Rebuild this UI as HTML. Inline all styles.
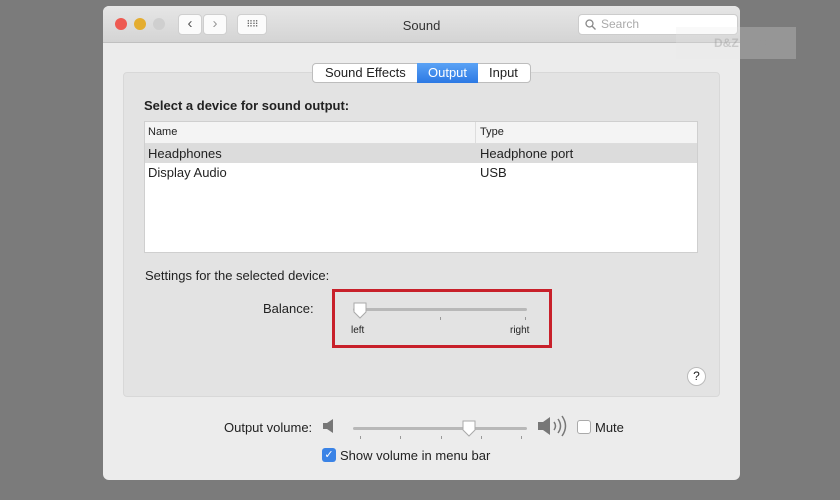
<!DOCTYPE html>
<html><head><meta charset="utf-8"><style>
*{margin:0;padding:0;box-sizing:border-box}
body{width:840px;height:500px;background:#7b7b7b;font-family:"Liberation Sans",sans-serif;position:relative;overflow:hidden;color:#222}
.a{position:absolute}
.win{left:103px;top:6px;width:637px;height:474px;background:#ececec;border-radius:6px;overflow:hidden}
.tb{left:0;top:0;width:637px;height:37px;background:linear-gradient(#e6e6e6,#d4d4d4);border-bottom:1px solid #c0c0c0}
.dot{width:12px;height:12px;border-radius:50%;top:12px}
.btn{background:#fbfbfb;border:1px solid #cfcfcf;border-radius:4px;height:21px;top:8px}
.panel{left:20px;top:66px;width:597px;height:325px;background:#e3e3e3;border:1px solid #d8d8d8;border-radius:4px}
.seg{top:57px;height:20px;background:#fff;border:1px solid #bdbdbd;border-radius:4px;font-size:13px;line-height:18px}
.t13{font-size:13px}
</style></head><body>
<div class="a win">
 <div class="a tb">
  <div class="a dot" style="left:12px;background:#ee5a52"></div>
  <div class="a dot" style="left:31px;background:#e4ad30"></div>
  <div class="a dot" style="left:50px;background:#cfcfcf"></div>
  <div class="a btn" style="left:75px;width:24px;font-size:15px;text-align:center;line-height:18px;color:#555">‹</div>
  <div class="a btn" style="left:100px;width:24px;font-size:15px;text-align:center;line-height:18px;color:#999">›</div>
  <div class="a btn" style="left:134px;width:30px;font-size:9px;text-align:center;line-height:19px;color:#666;letter-spacing:-1px">⠿⠿</div>
  <div class="a t13" style="left:0;width:637px;text-align:center;top:12px;color:#333">Sound</div>
  <div class="a" style="left:475px;top:8px;width:160px;height:21px;background:#fff;border:1px solid #ccc;border-radius:4px;font-size:12px;color:#aaa;line-height:19px;padding-left:22px">Search
   <svg class="a" style="left:6px;top:4px" width="11" height="11"><circle cx="4.5" cy="4.5" r="3.5" fill="none" stroke="#888" stroke-width="1.3"/><path d="M7 7l3.5 3.5" stroke="#888" stroke-width="1.3"/></svg></div>
 </div>
 <div class="a panel"></div>
 <div class="a seg" style="left:209px;width:219px"></div>
 <div class="a t13" style="left:222px;top:59px">Sound Effects</div>
 <div class="a" style="left:314px;top:57px;width:61px;height:20px;background:linear-gradient(#5aa2f5,#2c79e4);color:#fff;font-size:13px;line-height:20px;text-align:center">Output</div>
 <div class="a t13" style="left:386px;top:59px">Input</div>
 <div class="a t13" style="left:41px;top:92px;font-weight:bold">Select a device for sound output:</div>
 <div class="a" style="left:41px;top:115px;width:554px;height:132px;background:#fff;border:1px solid #cfcfcf">
  <div class="a" style="left:0;top:0;width:552px;height:22px;background:#f4f4f4;border-bottom:1px solid #ddd;font-size:11px;line-height:21px">
   <span class="a" style="left:3px">Name</span><span class="a" style="left:330px;top:0;height:21px;border-left:1px solid #ddd;padding-left:4px">Type</span></div>
  <div class="a t13" style="left:0;top:22px;width:552px;height:19px;background:#dcdcdc;line-height:19px"><span class="a" style="left:3px">Headphones</span><span class="a" style="left:335px">Headphone port</span></div>
  <div class="a t13" style="left:0;top:41px;width:552px;height:19px;line-height:19px"><span class="a" style="left:3px">Display Audio</span><span class="a" style="left:335px">USB</span></div>
 </div>
 <div class="a t13" style="left:42px;top:262px">Settings for the selected device:</div>
 <div class="a t13" style="left:160px;top:295px">Balance:</div>
 <div class="a" style="left:229px;top:283px;width:220px;height:59px;border:3px solid #c8202a"></div>
 <div class="a" style="left:250px;top:302px;width:174px;height:3px;background:#b8b8b8;border-radius:2px"></div>
 <div class="a" style="left:337px;top:311px;width:1px;height:3px;background:#999"></div>
 <div class="a" style="left:422px;top:311px;width:1px;height:3px;background:#999"></div>
 <svg class="a" style="left:249px;top:296px" width="16" height="18"><path d="M2 1h12v9l-6 6l-6-6z" fill="#fff" stroke="#aaa"/></svg>
 <div class="a" style="left:248px;top:319px;font-size:10px">left</div>
 <div class="a" style="left:407px;top:319px;font-size:10px">right</div>
 <div class="a" style="left:584px;top:361px;width:19px;height:19px;border-radius:50%;background:#fff;border:1px solid #bbb;font-size:12px;text-align:center;line-height:17px">?</div>
 <div class="a t13" style="left:121px;top:414px">Output volume:</div>
 <svg class="a" style="left:219px;top:411px" width="14" height="18"><path d="M1 6h4l6-4v14l-6-4H1z" fill="#777"/></svg>
 <div class="a" style="left:250px;top:421px;width:174px;height:3px;background:#b8b8b8;border-radius:2px"></div>
 <div class="a" style="left:257px;top:430px;width:1px;height:3px;background:#999"></div>
 <div class="a" style="left:297px;top:430px;width:1px;height:3px;background:#999"></div>
 <div class="a" style="left:338px;top:430px;width:1px;height:3px;background:#999"></div>
 <div class="a" style="left:378px;top:430px;width:1px;height:3px;background:#999"></div>
 <div class="a" style="left:418px;top:430px;width:1px;height:3px;background:#999"></div>
 <svg class="a" style="left:358px;top:414px" width="16" height="18"><path d="M2 1h12v9l-6 6l-6-6z" fill="#fff" stroke="#aaa"/></svg>
 <svg class="a" style="left:434px;top:408px" width="32" height="24"><path d="M1 8h5l7-5v18l-7-5H1z" fill="#777"/><path d="M17 8q3 4 0 8M21 5q5 7 0 14M25 2q7 10 0 20" fill="none" stroke="#777" stroke-width="1.5"/></svg>
 <div class="a" style="left:474px;top:414px;width:14px;height:14px;background:#fff;border:1px solid #aaa;border-radius:3px"></div>
 <div class="a t13" style="left:492px;top:414px">Mute</div>
 <div class="a" style="left:219px;top:442px;width:14px;height:14px;background:#3a83e6;border-radius:3px;color:#fff;font-size:11px;line-height:14px;text-align:center">✓</div>
 <div class="a t13" style="left:237px;top:442px">Show volume in menu bar</div>
</div>
<div class="a" style="left:676px;top:27px;width:120px;height:32px;background:rgba(230,230,230,.25);font-size:12px;font-weight:bold;color:rgba(150,150,150,.4);line-height:32px;padding-left:38px">D&amp;Z TECH</div>
</body></html>
